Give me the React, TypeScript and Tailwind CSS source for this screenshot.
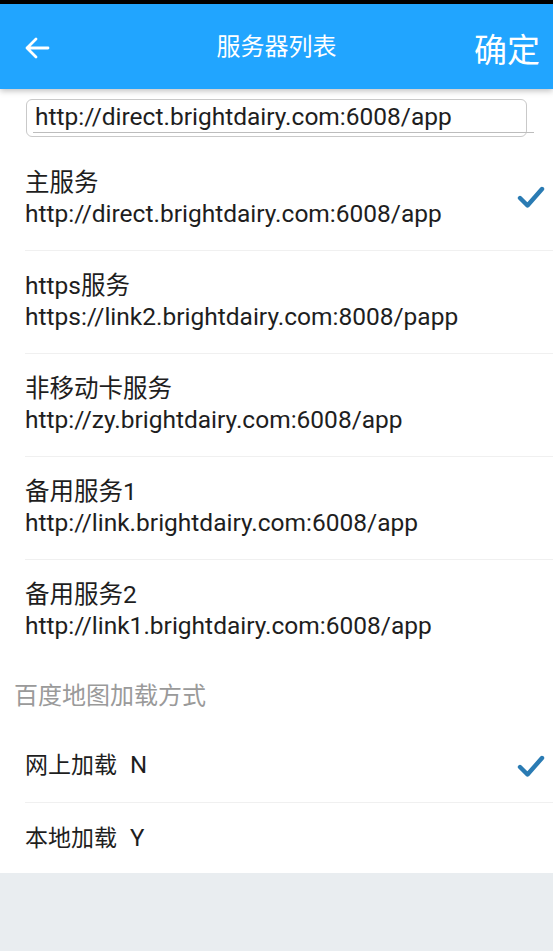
import React from "react";

const font = { fontFamily: 'Roboto, "Noto Sans CJK SC", sans-serif' };

function Check() {
  return (
    <svg width="28" height="24" viewBox="0 0 28 24" className="shrink-0">
      <path d="M3 13 L10.5 20.5 L25 4" fill="none" stroke="#2a7bb3" strokeWidth="4.4" strokeLinecap="round" strokeLinejoin="round" />
    </svg>
  );
}

const servers = [
  { name: "主服务", url: "http://direct.brightdairy.com:6008/app", checked: true },
  { name: "https服务", url: "https://link2.brightdairy.com:8008/papp" },
  { name: "非移动卡服务", url: "http://zy.brightdairy.com:6008/app" },
  { name: "备用服务1", url: "http://link.brightdairy.com:6008/app" },
  { name: "备用服务2", url: "http://link1.brightdairy.com:6008/app" },
];

export default function App() {
  return (
    <div className="w-[553px] h-[951px] bg-[#e9edf0] flex flex-col overflow-hidden" style={font}>
      <div className="h-[4px] bg-black shrink-0" />
      <div className="h-[85px] bg-[#21a5ff] flex items-center justify-between shrink-0 shadow-[0_2px_6px_rgba(0,0,0,0.25)] relative z-10">
        <div className="w-[80px] pl-[24px] pt-[2px]">
          <svg width="26" height="24" viewBox="0 0 26 24">
            <path d="M24 12 H3 M12 3 L3 12 L12 21" fill="none" stroke="white" strokeWidth="2.8" strokeLinecap="round" strokeLinejoin="round" />
          </svg>
        </div>
        <div className="text-white text-[24px] leading-none pt-[1px]">服务器列表</div>
        <div className="w-[80px] flex justify-end pr-[13px] pt-[8px]">
          <span className="text-white text-[33px] leading-none whitespace-nowrap">确定</span>
        </div>
      </div>
      <div className="bg-white">
        <div className="h-[59px] pt-[10px] pl-[26px]">
          <div className="relative w-[501px] h-[38px] border border-[#c9c9c9] rounded-[6px] flex items-center pl-[8px]">
            <span className="text-[#1e1e1e] text-[24.5px] leading-none pb-[1px] whitespace-nowrap">http://direct.brightdairy.com:6008/app</span>
            <div className="absolute left-[6px] right-[-8px] bottom-[3px] h-[1px] bg-[#bdbdbd]" />
          </div>
        </div>
        {servers.map((s, i) => (
          <div key={i} className="pl-[25px]">
            <div className={"h-[103px] flex items-center justify-between pr-[8px] " + (i < servers.length - 1 ? "border-b border-[#f0f0f0]" : "")}>
              <div className="flex flex-col text-[#1e1e1e] text-[24.5px] leading-[31px] pb-[3px] whitespace-nowrap">
                <span>{s.name}</span>
                <span>{s.url}</span>
              </div>
              {s.checked && <div className="pb-[4px]"><Check /></div>}
            </div>
          </div>
        ))}
        <div className="h-[66px] flex items-center pl-[14px] text-[#9a9a9a] text-[24px]">百度地图加载方式</div>
        <div className="pl-[25px]">
          <div className="h-[74px] flex items-center justify-between pr-[8px] border-b border-[#f0f0f0]">
            <span className="text-[#1e1e1e] text-[23px]">网上加载<span className="ml-[13px] text-[24px]">N</span></span>
            <Check />
          </div>
          <div className="h-[70px] flex items-center">
            <span className="text-[#1e1e1e] text-[23px]">本地加载<span className="ml-[13px] text-[24px]">Y</span></span>
          </div>
        </div>
      </div>
    </div>
  );
}
